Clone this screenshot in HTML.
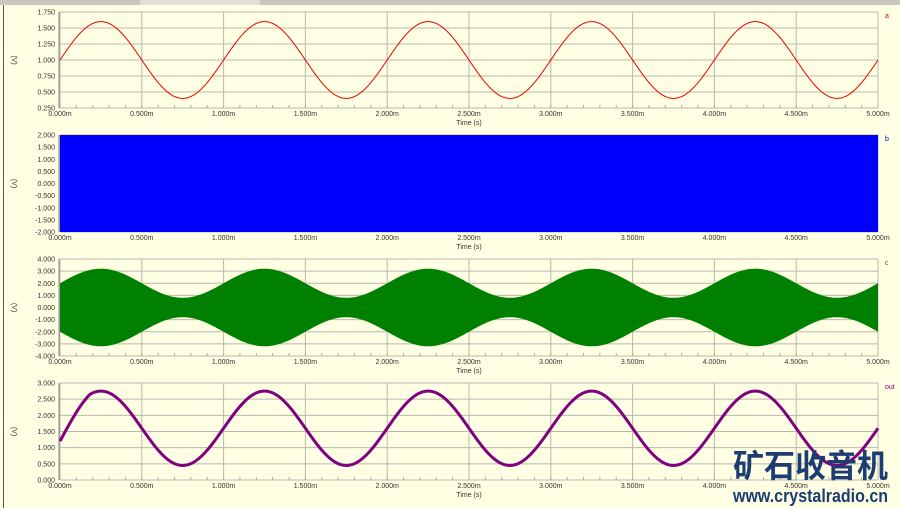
<!DOCTYPE html>
<html><head><meta charset="utf-8">
<style>
html,body{margin:0;padding:0;width:900px;height:508px;overflow:hidden;background:#ffffe3;}
svg text{font-family:"Liberation Sans",sans-serif;}
</style></head><body>
<svg id="s" width="900" height="508" xmlns="http://www.w3.org/2000/svg" style="position:absolute;left:0;top:0"></svg>
<script>
var s='';
s+='<rect x="0" y="0" width="900" height="5" fill="#c8c8c0"/>';
s+='<rect x="140" y="0" width="120" height="5" fill="#e0e0d8"/>';
s+='<line x1="3.5" y1="5" x2="3.5" y2="508" stroke="#555" stroke-width="1"/>';
var X0=60,X1=878,W=X1-X0;
var panels=[
 {t:12,b:108,labels:['1.750','1.500','1.250','1.000','0.750','0.500','0.250'],name:'a',nc:'#d00'},
 {t:135,b:232,labels:['2.000','1.500','1.000','0.500','0.000','-0.500','-1.000','-1.500','-2.000'],name:'b',nc:'#00c'},
 {t:259,b:356,labels:['4.000','3.000','2.000','1.000','0.000','-1.000','-2.000','-3.000','-4.000'],name:'c',nc:'#080'},
 {t:383,b:480,labels:['3.000','2.500','2.000','1.500','1.000','0.500','0.000'],name:'out',nc:'#808'}
];
var tl=['0.000m','0.500m','1.000m','1.500m','2.000m','2.500m','3.000m','3.500m','4.000m','4.500m','5.000m'];
panels.forEach(function(p,i){
 var h=p.b-p.t,n=p.labels.length-1;
 for(var k=0;k<=n;k++){var y=p.t+h*k/n;
  s+='<line x1="'+X0+'" y1="'+y+'" x2="'+X1+'" y2="'+y+'" stroke="#b8b8b0" stroke-width="1"/>';
  s+='<text x="55" y="'+(y+2.5)+'" font-size="7" text-anchor="end" fill="#333">'+p.labels[k]+'</text>';}
 for(var k=0;k<=10;k++){var x=X0+W*k/10;
  s+='<line x1="'+x+'" y1="'+p.t+'" x2="'+x+'" y2="'+p.b+'" stroke="#b8b8b0" stroke-width="1"/>';
  s+='<text x="'+x+'" y="'+(p.b+8)+'" font-size="7" text-anchor="middle" fill="#333">'+tl[k]+'</text>';}
 for(var k=0;k<50;k++){var x=X0+W*k/50;s+='<line x1="'+x+'" y1="'+(p.b-3)+'" x2="'+x+'" y2="'+p.b+'" stroke="#aaa"/>';}
 s+='<line x1="'+(X0-1)+'" y1="'+p.t+'" x2="'+(X0-1)+'" y2="'+p.b+'" stroke="#888"/>';
 s+='<text x="469" y="'+(p.b+17)+'" font-size="7" text-anchor="middle" fill="#333">Time (s)</text>';
 s+='<text x="12" y="'+((p.t+p.b)/2)+'" font-size="7" fill="#333" transform="rotate(90 12 '+((p.t+p.b)/2)+')" text-anchor="middle">(V)</text>';
 s+='<text x="885" y="'+(p.t+6)+'" font-size="7" fill="'+p.nc+'">'+p.name+'</text>';
});
function yv(p,v,lo,hi){return p.t+(hi-v)/(hi-lo)*(p.b-p.t);}
var p=panels[0],d='';
for(var x=0;x<=W;x++){var v=1+0.6*Math.sin(2*Math.PI*5*x/W);d+=(x?'L':'M')+(X0+x)+' '+yv(p,v,0.25,1.75).toFixed(2);}
s+='<path d="'+d+'" fill="none" stroke="#e00" stroke-width="1"/>';
p=panels[1];s+='<rect x="'+X0+'" y="'+p.t+'" width="'+W+'" height="'+(p.b-p.t)+'" fill="#0000ff"/>';
p=panels[2];var up='';
for(var x=0;x<=W;x++){var e=2+1.2*Math.sin(2*Math.PI*5*x/W);up+=(x?'L':'M')+(X0+x)+' '+yv(p,e,-4,4).toFixed(2);}
for(var x=W;x>=0;x--){var e=2+1.2*Math.sin(2*Math.PI*5*x/W);up+='L'+(X0+x)+' '+yv(p,-e,-4,4).toFixed(2);}
s+='<path d="'+up+'Z" fill="#008000"/>';
p=panels[3];d='';
for(var x=0;x<=W;x++){var v=1.6+1.15*Math.sin(2*Math.PI*5*x/W);if(x<30)v=v-0.4*(1-x/30);d+=(x?'L':'M')+(X0+x)+' '+yv(p,v,0,3).toFixed(2);}
s+='<path d="'+d+'" fill="none" stroke="#800080" stroke-width="3"/>';
s+='<text x="733" y="477" font-size="32" font-weight="bold" fill="#1c3c72" textLength="155" lengthAdjust="spacingAndGlyphs" style="font-family:\'Noto Sans CJK SC\',sans-serif">矿石收音机</text>';
s+='<text x="733" y="502" font-size="18" font-weight="bold" fill="#1c3c72" textLength="155" lengthAdjust="spacingAndGlyphs">www.crystalradio.cn</text>';
document.getElementById('s').innerHTML=s;
</script>
</body></html>
